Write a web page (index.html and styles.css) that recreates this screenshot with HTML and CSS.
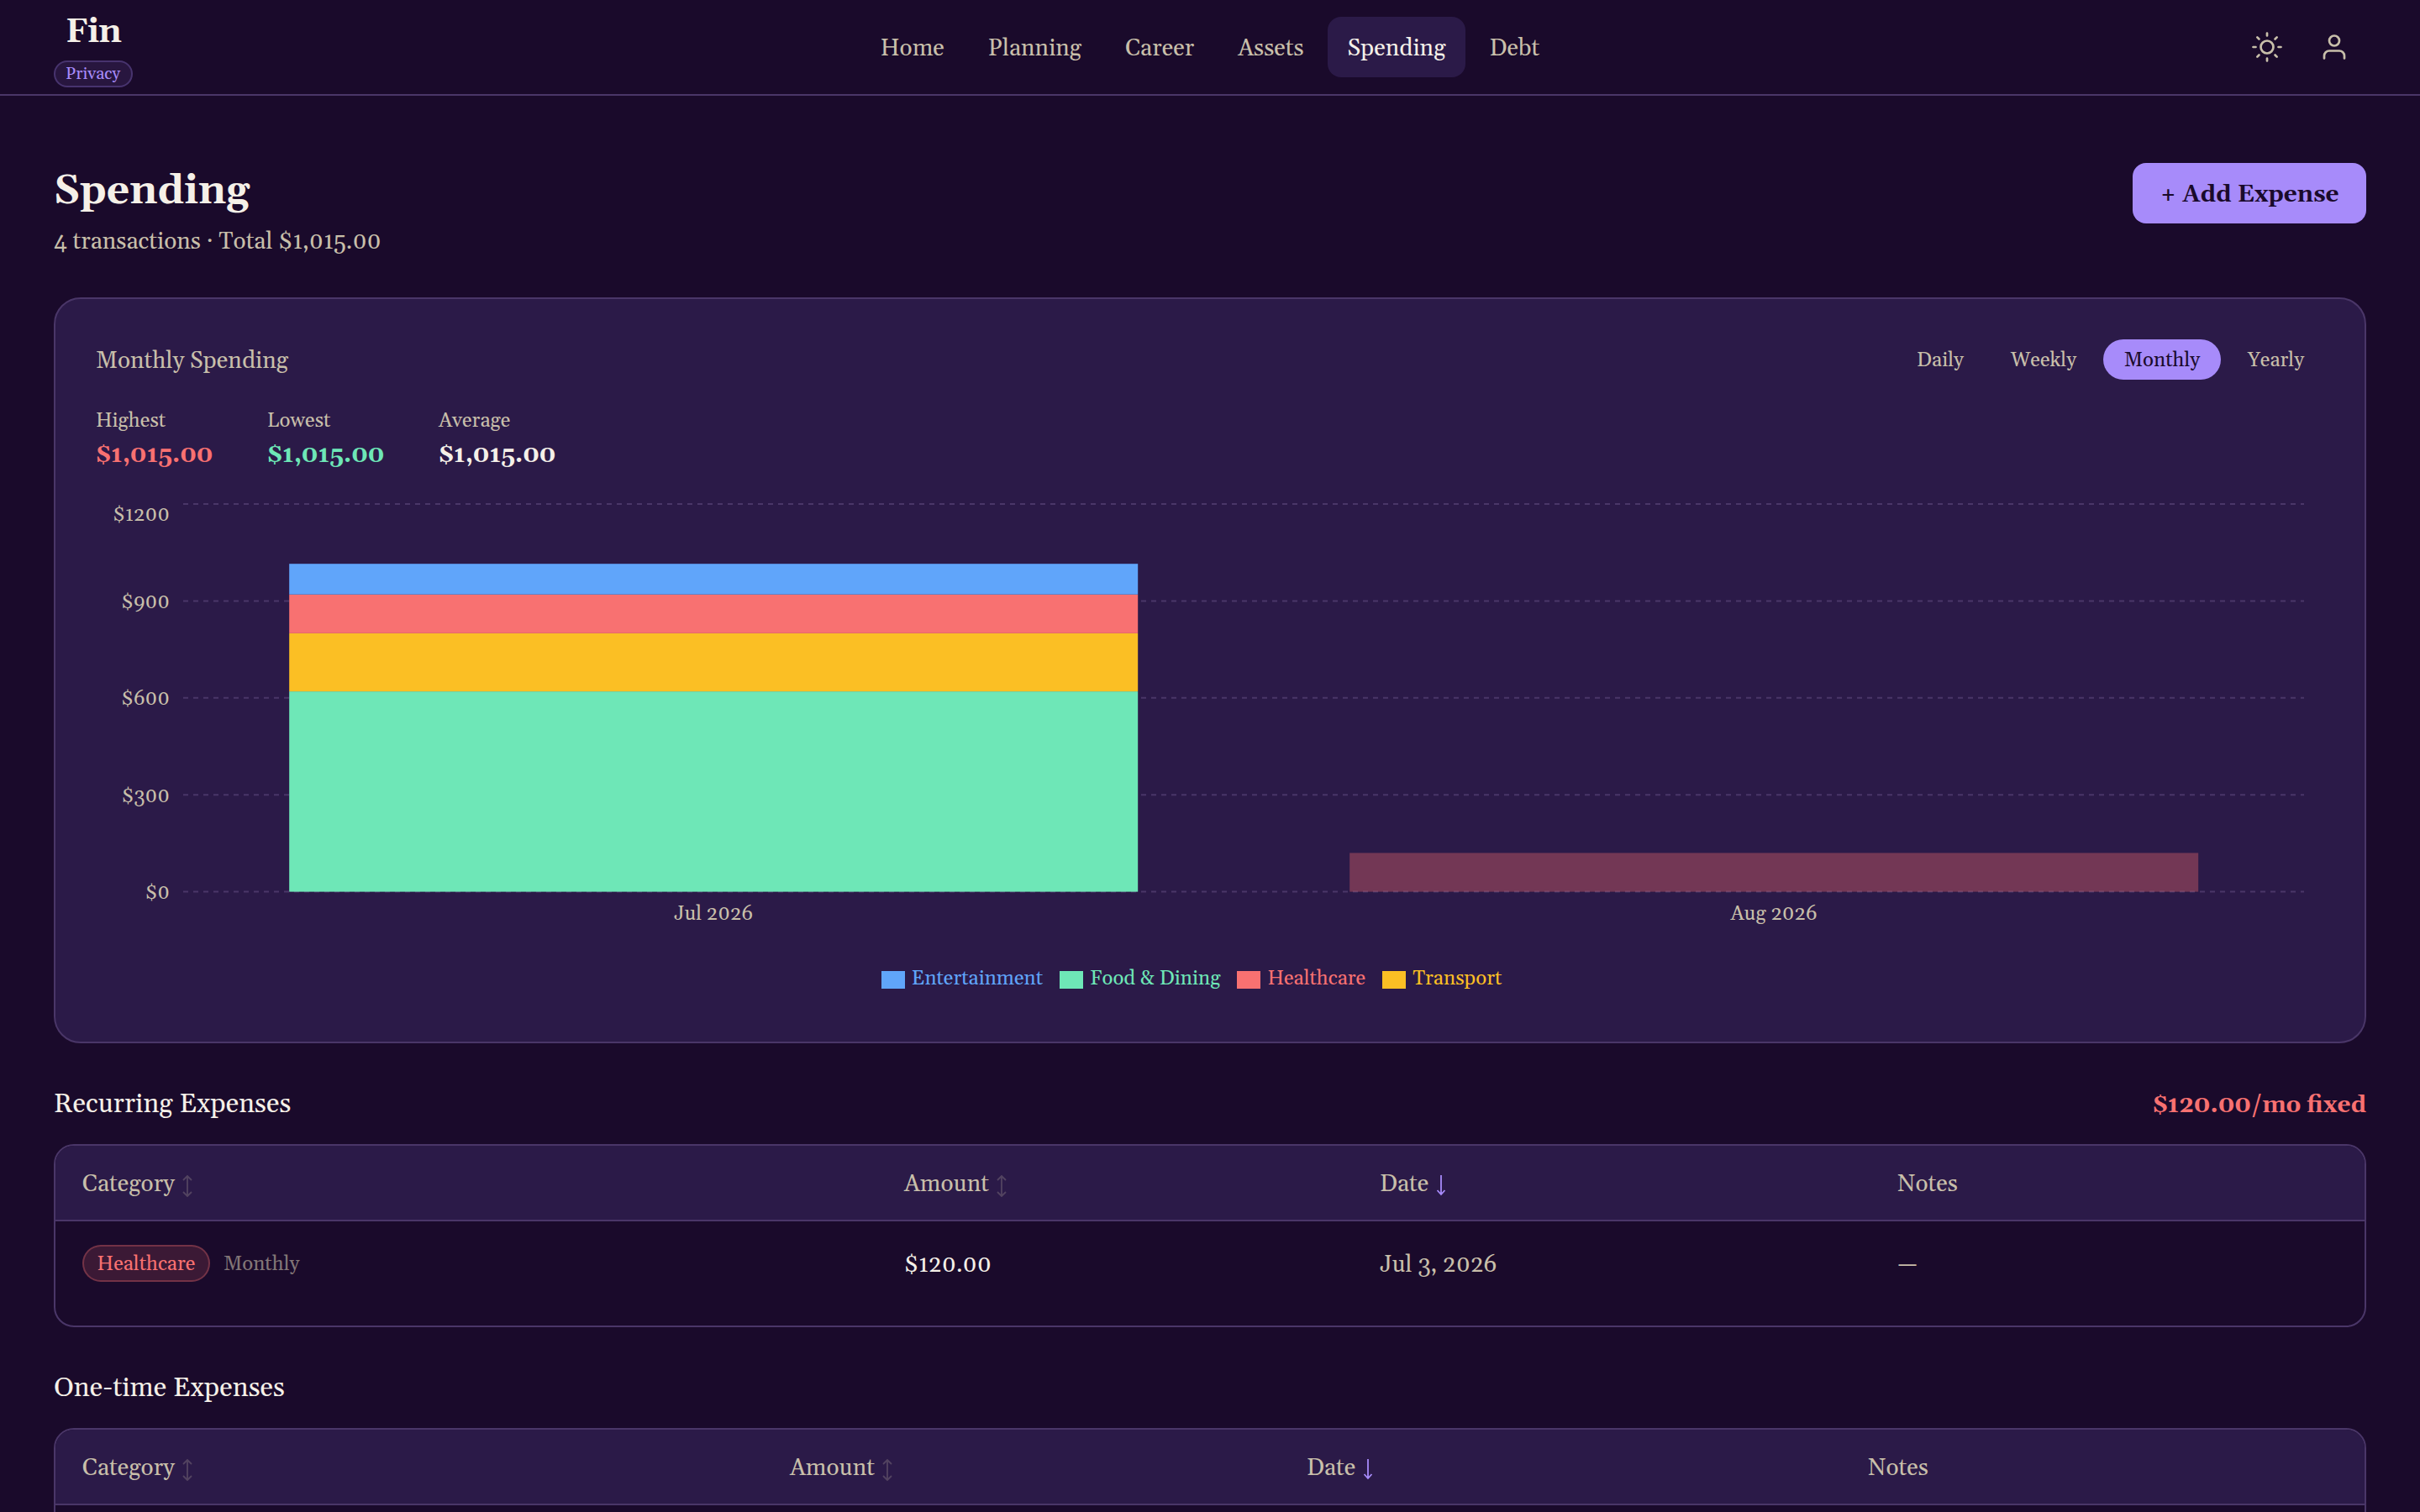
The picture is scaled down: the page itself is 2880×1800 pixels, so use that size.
FILE: index.html
```
<!DOCTYPE html>
<html lang="en">
<head>
    <meta charset="UTF-8">
    <meta name="viewport" content="width=device-width, initial-scale=1.0">
    <title>Fin - Spending</title>
    <link rel="stylesheet" href="styles.css">
</head>
<body>
    <header class="topbar">
        <div class="brand">
            <span class="brand-name">Fin</span>
            <span class="brand-badge">Privacy</span>
        </div>
        <nav class="nav">
            <a class="nav-link">Home</a>
            <a class="nav-link">Planning</a>
            <a class="nav-link">Career</a>
            <a class="nav-link">Assets</a>
            <a class="nav-link active">Spending</a>
            <a class="nav-link">Debt</a>
        </nav>
        <div class="actions">
            <button class="icon-btn" aria-label="Theme">
                <svg class="icon" viewBox="0 0 24 24">
                    <circle cx="12" cy="12" r="5"/>
                    <path d="M12 1v2M12 21v2M4.22 4.22l1.42 1.42M18.36 18.36l1.42 1.42M1 12h2M21 12h2M4.22 19.78l1.42-1.42M18.36 5.64l1.42-1.42"/>
                </svg>
            </button>
            <button class="icon-btn" aria-label="Account">
                <svg class="icon" viewBox="0 0 24 24">
                    <path d="M20 21v-2a4 4 0 0 0-4-4H8a4 4 0 0 0-4 4v2"/>
                    <circle cx="12" cy="7" r="4"/>
                </svg>
            </button>
        </div>
    </header>

    <main class="page">
        <div class="page-header">
            <div>
                <h1 class="page-title">Spending</h1>
                <p class="page-subtitle">4 transactions · Total $1,015.00</p>
            </div>
            <button class="btn-primary">+ Add Expense</button>
        </div>

        <section class="card">
            <div class="card-header">
                <span class="card-title">Monthly Spending</span>
                <div class="range">
                    <button class="range-btn">Daily</button>
                    <button class="range-btn">Weekly</button>
                    <button class="range-btn active">Monthly</button>
                    <button class="range-btn">Yearly</button>
                </div>
            </div>

            <div class="stats">
                <div class="stat">
                    <div class="stat-label">Highest</div>
                    <div class="stat-value high">$1,015.00</div>
                </div>
                <div class="stat">
                    <div class="stat-label">Lowest</div>
                    <div class="stat-value low">$1,015.00</div>
                </div>
                <div class="stat">
                    <div class="stat-label">Average</div>
                    <div class="stat-value">$1,015.00</div>
                </div>
            </div>

            <svg class="chart" viewBox="0 0 2652 540">
                <g class="grid">
                    <line x1="104" y1="8" x2="2628" y2="8"/>
                    <line x1="104" y1="123.4" x2="2628" y2="123.4"/>
                    <line x1="104" y1="238.8" x2="2628" y2="238.8"/>
                    <line x1="104" y1="354.2" x2="2628" y2="354.2"/>
                    <line x1="104" y1="469.6" x2="2628" y2="469.6"/>
                </g>
                <!-- Jul 2026 -->
                <rect class="food" x="230.2" y="231.1" width="1010" height="238.5"/>
                <rect class="transport" x="230.2" y="161.9" width="1010" height="69.2"/>
                <rect class="health" x="230.2" y="115.7" width="1010" height="46.2"/>
                <rect class="entertainment" x="230.2" y="79.2" width="1010" height="36.5"/>
                <!-- Aug 2026, projected -->
                <rect class="health projected" x="1492.2" y="423.4" width="1010" height="46.2"/>
                <g class="axis-y">
                    <text x="88" y="28">$1200</text>
                    <text x="88" y="131.9">$900</text>
                    <text x="88" y="247.3">$600</text>
                    <text x="88" y="362.7">$300</text>
                    <text x="88" y="478.1">$0</text>
                </g>
                <g class="axis-x">
                    <text x="735" y="503">Jul 2026</text>
                    <text x="1997" y="503">Aug 2026</text>
                </g>
            </svg>
            <ul class="legend">
                <li class="legend-item entertainment"><i class="swatch"></i>Entertainment</li>
                <li class="legend-item food"><i class="swatch"></i>Food &amp; Dining</li>
                <li class="legend-item health"><i class="swatch"></i>Healthcare</li>
                <li class="legend-item transport"><i class="swatch"></i>Transport</li>
            </ul>
        </section>

        <div class="section-header">
            <h2 class="section-title">Recurring Expenses</h2>
            <span class="section-total">$120.00/mo fixed</span>
        </div>
        <div class="table recurring">
            <div class="row head">
                <div class="cell">Category <svg class="sort" viewBox="0 0 12 26"><path d="M6 1v24M1 6l5-5 5 5M1 20l5 5 5-5"/></svg></div>
                <div class="cell">Amount <svg class="sort" viewBox="0 0 12 26"><path d="M6 1v24M1 6l5-5 5 5M1 20l5 5 5-5"/></svg></div>
                <div class="cell">Date <svg class="sort on" viewBox="0 0 12 26"><path d="M6 0v23M1.500 18l4.500 5 4.500-5"/></svg></div>
                <div class="cell">Notes</div>
            </div>
            <div class="row">
                <div class="cell"><span class="tag">Healthcare</span><span class="freq">Monthly</span></div>
                <div class="cell value amount">$120.00</div>
                <div class="cell value">Jul 3, 2026</div>
                <div class="cell value">—</div>
            </div>
        </div>

        <div class="section-header">
            <h2 class="section-title">One-time Expenses</h2>
        </div>
        <div class="table onetime">
            <div class="row head">
                <div class="cell">Category <svg class="sort" viewBox="0 0 12 26"><path d="M6 1v24M1 6l5-5 5 5M1 20l5 5 5-5"/></svg></div>
                <div class="cell">Amount <svg class="sort" viewBox="0 0 12 26"><path d="M6 1v24M1 6l5-5 5 5M1 20l5 5 5-5"/></svg></div>
                <div class="cell">Date <svg class="sort on" viewBox="0 0 12 26"><path d="M6 0v23M1.500 18l4.500 5 4.500-5"/></svg></div>
                <div class="cell">Notes</div>
            </div>
            <div class="row"></div>
        </div>
    </main>
</body>
</html>
```

FILE: styles.css
```
:root {
    --bg: #1a0a2b;
    --surface: #2b1a48;
    --border: #4a3668;
    --text: #f5f0e8;
    --muted: #c8bfaa;
    --accent: #a78bfa;
    --red: #f87171;
    --green: #6ee7b7;
    --blue: #60a5fa;
    --yellow: #fbbf24;
}
* {
    box-sizing: border-box;
    margin: 0;
    padding: 0;
}
body {
    height: 100vh;
    overflow: hidden;
    background: var(--bg);
    color: var(--text);
    font-family: Gelasio, Georgia, "Liberation Serif", serif;
    font-size: 28px;
}
button {
    border: none;
    background: none;
    font-family: inherit;
}

/* Top bar */
.topbar {
    display: grid;
    grid-template-columns: 1fr auto 1fr;
    align-items: center;
    height: 114px;
    padding: 0 64px;
    border-bottom: 2px solid var(--border);
}
.brand {
    display: flex;
    flex-direction: column;
    align-items: center;
    justify-self: start;
    gap: 2px;
}
.brand-name {
    font-size: 40px;
    font-weight: 700;
    line-height: 62px;
    letter-spacing: -0.8px;
}
.brand-badge {
    min-width: 94px;
    height: 32px;
    padding: 0 12px;
    border: 2px solid rgba(167, 139, 250, 0.25);
    border-radius: 16px;
    background: rgba(167, 139, 250, 0.1);
    color: var(--accent);
    font-size: 20px;
    line-height: 28px;
}
.nav {
    display: flex;
    gap: 4px;
}
.nav-link {
    height: 72px;
    padding: 0 24px;
    border-radius: 16px;
    color: var(--muted);
    line-height: 76px;
}
.nav-link.active {
    background: var(--surface);
    color: var(--text);
}
.actions {
    display: flex;
    justify-self: end;
    gap: 4px;
}
.icon-btn {
    display: flex;
    align-items: center;
    justify-content: center;
    width: 76px;
    height: 76px;
}
.icon {
    width: 36px;
    height: 36px;
    overflow: visible;
    fill: none;
    stroke: var(--muted);
    stroke-width: 1.8;
    stroke-linecap: round;
    stroke-linejoin: round;
}

/* Page */
.page {
    height: calc(100vh - 114px);
    padding: 80px 64px 0;
    overflow: hidden;
}
.page-header {
    display: flex;
    align-items: flex-start;
    justify-content: space-between;
    height: 160px;
}
.page-title {
    font-size: 48px;
    font-weight: 700;
    line-height: 68px;
}
.page-subtitle {
    margin-top: 6px;
    color: var(--muted);
    line-height: 40px;
}
.btn-primary {
    min-width: 278px;
    height: 72px;
    padding: 4px 32px 0;
    border-radius: 16px;
    background: var(--accent);
    color: var(--bg);
    font-size: 28px;
    font-weight: 700;
}

/* Chart card */
.card {
    height: 888px;
    padding: 48px;
    border: 2px solid var(--border);
    border-radius: 32px;
    background: var(--surface);
}
.card-header {
    display: flex;
    align-items: center;
    justify-content: space-between;
}
.card-title {
    padding-top: 4px;
    color: var(--muted);
}
.range {
    display: flex;
    gap: 8px;
}
.range-btn {
    height: 48px;
    padding: 2px 24px 0;
    border-radius: 24px;
    color: var(--muted);
    font-size: 24px;
}
.range-btn.active {
    min-width: 140px;
    background: var(--accent);
    color: var(--bg);
}
.stats {
    display: flex;
    gap: 64px;
    height: 107px;
    margin-top: 33px;
}
.stat {
    min-width: 140px;
}
.stat-label {
    color: var(--muted);
    font-size: 24px;
    line-height: 32px;
}
.stat-value {
    margin-top: 4px;
    font-weight: 700;
    line-height: 42px;
}
.stat-value.high {
    color: var(--red);
}
.stat-value.low {
    color: var(--green);
}
.chart {
    display: block;
    width: 100%;
    height: 540px;
}
.chart text {
    fill: var(--muted);
    font-size: 24px;
}
.chart .grid line {
    stroke: var(--border);
    stroke-width: 2;
    stroke-dasharray: 6 6;
}
.axis-y {
    text-anchor: end;
}
.axis-x {
    text-anchor: middle;
}
.entertainment {
    fill: var(--blue);
    color: var(--blue);
}
.food {
    fill: var(--green);
    color: var(--green);
}
.health {
    fill: var(--red);
    color: var(--red);
}
.transport {
    fill: var(--yellow);
    color: var(--yellow);
}
.projected {
    opacity: 0.35;
}
.legend {
    display: flex;
    justify-content: center;
    padding: 15px 24px 0 0;
    list-style: none;
    font-size: 24px;
    line-height: 36px;
}
.legend-item {
    display: flex;
    align-items: center;
    margin-right: 20px;
}
.swatch {
    width: 28px;
    height: 21px;
    margin: 2px 8px 0 0;
    background: currentColor;
}

/* Expense tables */
.section-header {
    display: flex;
    align-items: center;
    justify-content: space-between;
    height: 120px;
    padding-top: 25px;
}
.section-title {
    font-size: 32px;
    font-weight: 400;
}
.section-total {
    padding-top: 3px;
    color: var(--red);
    font-weight: 700;
}
.table {
    overflow: hidden;
    border: 2px solid var(--border);
    border-radius: 24px;
}
.row {
    display: grid;
    height: 124px;
    padding: 28px 0 0 32px;
    color: var(--muted);
}
.recurring .row {
    grid-template-columns: 978px 566px 616px 1fr;
}
.onetime .row {
    grid-template-columns: 842px 615px 668px 1fr;
}
.row.head {
    align-items: center;
    height: 90px;
    padding-top: 4px;
    border-bottom: 2px solid var(--border);
    background: var(--surface);
}
.cell {
    display: flex;
    align-items: center;
    height: 44px;
}
.cell.value {
    padding-top: 4px;
}
.cell.amount {
    color: var(--text);
}
.sort {
    width: 12px;
    height: 26px;
    margin: 3px 0 0 9px;
    fill: none;
    stroke: var(--muted);
    stroke-width: 1.8;
    opacity: 0.25;
}
.sort.on {
    stroke: var(--accent);
    opacity: 1;
}
.tag {
    width: 152px;
    height: 44px;
    border: 2px solid rgba(248, 113, 113, 0.3);
    border-radius: 22px;
    background: rgba(248, 113, 113, 0.15);
    color: var(--red);
    font-size: 24px;
    line-height: 42px;
    text-align: center;
}
.freq {
    margin-left: 16px;
    padding-top: 2px;
    font-size: 24px;
    opacity: 0.6;
}
```
